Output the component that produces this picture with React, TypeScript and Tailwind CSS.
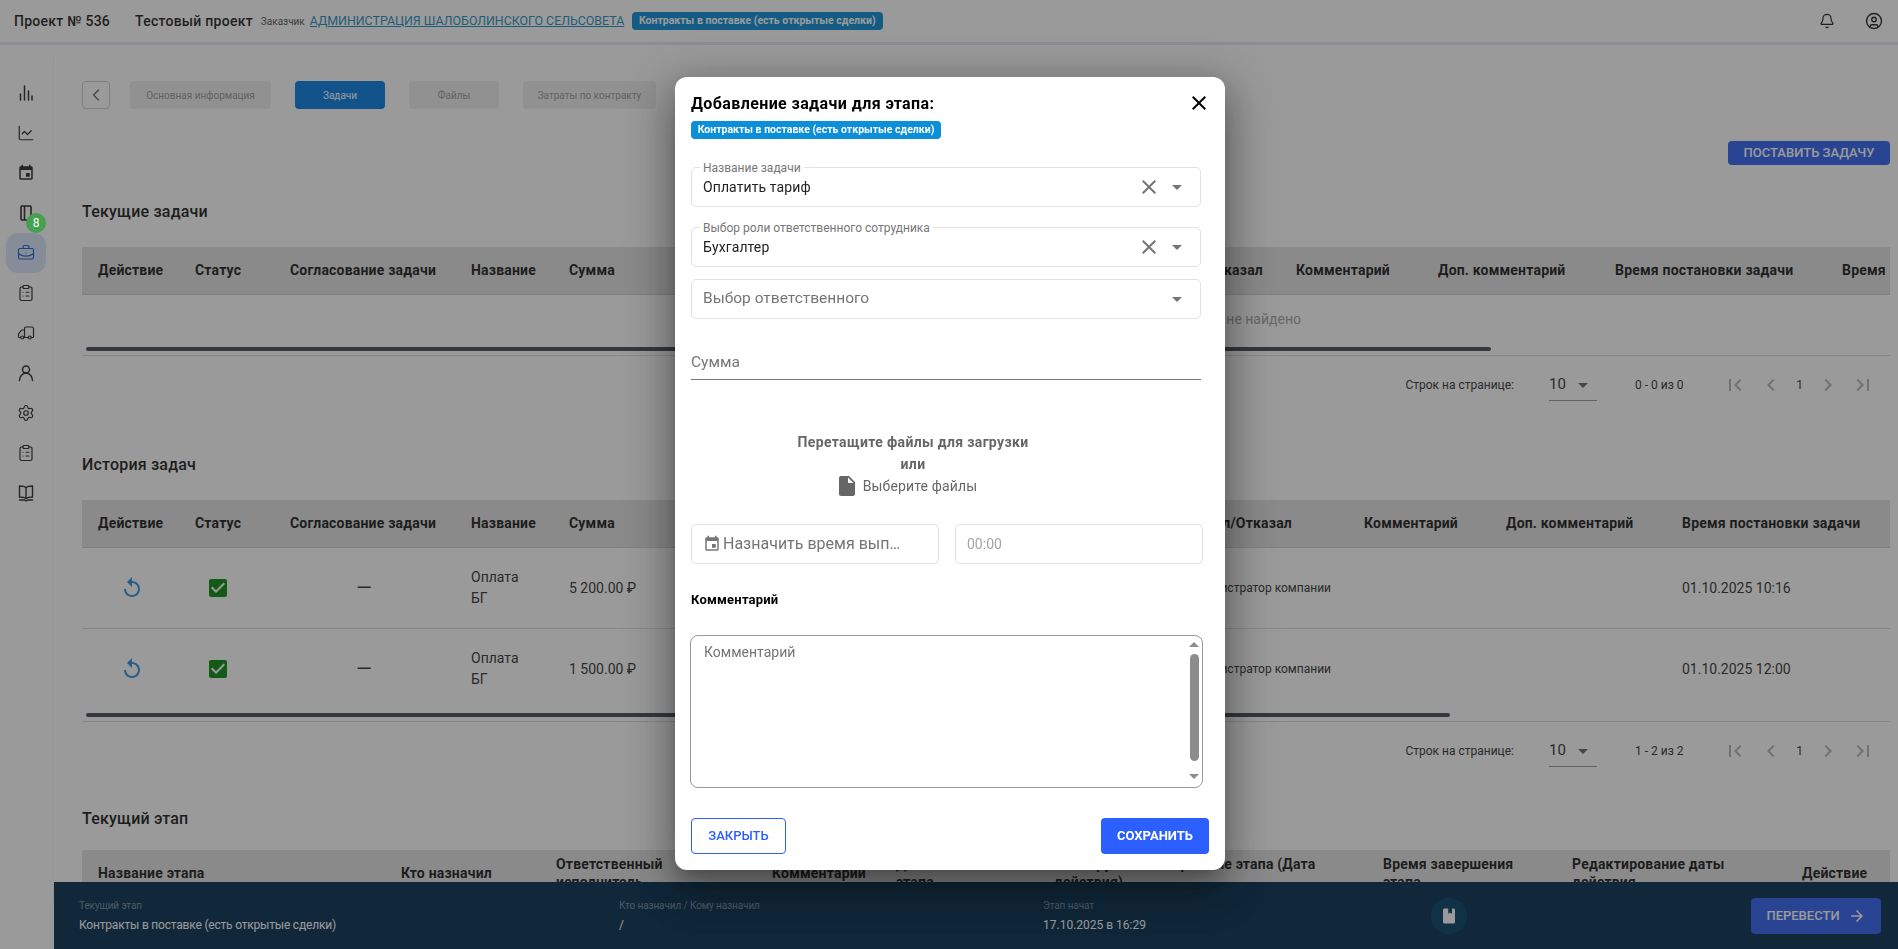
import { Bell, BriefcaseBusiness, ChartLine, CircleUser, ChevronLeft, ClipboardList, Settings, Truck } from "lucide-react";

type MuiIconProps = { d: string; className?: string };

const MuiIcon = ({ d, className }: MuiIconProps) => (
  <svg viewBox="0 0 24 24" fill="currentColor" className={className}>
    <path d={d} />
  </svg>
);

const CLOSE = "M19 6.41 17.59 5 12 10.59 6.41 5 5 6.41 10.59 12 5 17.59 6.41 19 12 13.41 17.59 19 19 17.59 13.41 12z";
const CARET = "M7 10l5 5 5-5z";
const FILE = "M6 2c-1.1 0-1.99.9-1.99 2L4 20c0 1.1.89 2 1.99 2H18c1.1 0 2-.9 2-2V8l-6-6H6zm7 7V3.5L18.5 9H13z";
const EVENT = "M17 12h-5v5h5v-5zM16 1v2H8V1H6v2H5c-1.11 0-1.99.9-1.99 2L3 19c0 1.1.89 2 2 2h14c1.1 0 2-.9 2-2V5c0-1.1-.9-2-2-2h-1V1h-2zm3 18H5V8h14v11z";
const REPLAY = "M12 5V1L7 6l5 5V7c3.31 0 6 2.69 6 6s-2.69 6-6 6-6-2.69-6-6H4c0 4.42 3.58 8 8 8s8-3.58 8-8-3.58-8-8-8z";
const CHECKBOX = "M19 3H5c-1.11 0-2 .9-2 2v14c0 1.1.89 2 2 2h14c1.11 0 2-.9 2-2V5c0-1.1-.89-2-2-2zm-9 14l-5-5 1.41-1.41L10 14.17l7.59-7.59L19 8l-9 9z";
const FIRST = "M18.41 16.59L13.82 12l4.59-4.59L17 6l-6 6 6 6zM6 6h2v12H6z";
const PREV = "M15.41 7.41L14 6l-6 6 6 6 1.41-1.41L10.83 12z";
const NEXT = "M10 6L8.59 7.41 13.17 12l-4.58 4.59L10 18l6-6z";
const LAST = "M5.59 7.41L10.18 12l-4.59 4.59L7 18l6-6-6-6zM16 6h2v12h-2z";
const ARROW = "M12 4l-1.41 1.41L16.17 11H4v2h12.17l-5.58 5.59L12 20l8-8z";
const BOOKMARK = "M18 2h-2v7l-2.5-1.5L11 9V2H6c-1.1 0-2 .9-2 2v16c0 1.1.9 2 2 2h12c1.1 0 2-.9 2-2V4c0-1.1-.9-2-2-2z";

const tabs = ["Основная информация", "Задачи", "Файлы", "Затраты по контракту"];

const currentCols = "grid-cols-[97px_95px_181px_98px_539px_188px_142px_177px_227px_200px]";
const historyCols = "grid-cols-[97px_95px_181px_98px_568px_227px_142px_176px_220px]";
const stageCols = "grid-cols-[303px_155px_216px_124px_158px_329px_189px_230px_88px]";

const currentHead = ["Действие", "Статус", "Согласование задачи", "Название", "Сумма", "Согласовал/Отказал", "Комментарий", "Доп. комментарий", "Время постановки задачи", "Время выполнения"];
const historyHead = ["Действие", "Статус", "Согласование задачи", "Название", "Сумма", "Согласовал/Отказал", "Комментарий", "Доп. комментарий", "Время постановки задачи"];

const historyRows = [
  { sum: "5 200.00 ₽", time: "01.10.2025 10:16" },
  { sum: "1 500.00 ₽", time: "01.10.2025 12:00" },
];

function SideIcons() {
  const cls = "h-[18px] w-[18px] text-[#2a2a2a]";
  return (
    <aside className="mt-3 w-[54px] shrink-0 border-r border-[#f2f2f2] pr-px pt-4">
      <div className="flex h-10 items-center justify-center">
        <svg viewBox="0 0 18 18" className={cls} fill="none" stroke="currentColor" strokeWidth="1.5" strokeLinecap="round">
          <path d="M3.5 16V10M7.5 16V2M11.5 16V7M15 16v-4" />
        </svg>
      </div>
      <div className="flex h-10 items-center justify-center">
        <ChartLine className={cls} strokeWidth={1.6} />
      </div>
      <div className="flex h-10 items-center justify-center">
        <MuiIcon d={EVENT} className="h-[18px] w-[18px] text-[#2a2a2a]" />
      </div>
      <div className="relative flex h-10 items-center justify-center">
        <svg viewBox="0 0 18 18" className={cls} fill="none" stroke="currentColor" strokeWidth="1.6">
          <rect x="4" y="2" width="10" height="14" rx="1" />
          <path d="M7.5 2v14" />
        </svg>
        <span className="absolute left-[26px] top-5 z-10 flex h-5 w-5 items-center justify-center rounded-full bg-[#46a04d] text-xs text-white">8</span>
      </div>
      <div className="flex h-10 items-center justify-center">
        <div className="flex h-10 w-10 items-center justify-center rounded-xl bg-[#dce8fb]">
          <BriefcaseBusiness className="h-[18px] w-[18px] text-[#1f5fd0]" strokeWidth={1.6} />
        </div>
      </div>
      <div className="flex h-10 items-center justify-center">
        <ClipboardList className={cls} strokeWidth={1.6} />
      </div>
      <div className="flex h-10 items-center justify-center">
        <Truck className={`${cls} -scale-x-100`} strokeWidth={1.6} />
      </div>
      <div className="flex h-10 items-center justify-center">
        <svg viewBox="0 0 18 18" className={cls} fill="none" stroke="currentColor" strokeWidth="1.5" strokeLinecap="round">
          <circle cx="9" cy="5.5" r="3.5" />
          <path d="M2.5 16.5c0-4 3-7.5 6.5-7.5s6.5 3.5 6.5 7.5" />
        </svg>
      </div>
      <div className="flex h-10 items-center justify-center">
        <Settings className={cls} strokeWidth={1.6} />
      </div>
      <div className="flex h-10 items-center justify-center">
        <ClipboardList className={cls} strokeWidth={1.6} />
      </div>
      <div className="flex h-10 items-center justify-center">
        <svg viewBox="0 0 18 18" className={cls} fill="none" stroke="currentColor" strokeWidth="1.4" strokeLinejoin="round" strokeLinecap="round">
          <path d="M9 3.5C7.5 2.3 5 2 2.5 2v11c2.5 0 5 .3 6.5 1.5 1.5-1.2 4-1.5 6.5-1.5V2C13 2 10.5 2.3 9 3.5zM9 3.5v11M2.5 16h5l1.5 1 1.5-1h5" />
        </svg>
      </div>
    </aside>
  );
}

function Pagination({ range }: { range: string }) {
  return (
    <div className="flex h-[58px] items-center justify-end pr-[15px] text-xs text-[#333]">
      <span>Строк на странице:</span>
      <div className="ml-[35px] flex h-[32px] w-12 items-center justify-between border-b border-[#999] pr-0.5 text-[15px]">
        10
        <MuiIcon d={CARET} className="h-6 w-6 text-[#666]" />
      </div>
      <span className="ml-[38px] w-[50px]">{range}</span>
      <div className="ml-[38px] flex items-center text-[#b5b5b5]">
        <MuiIcon d={FIRST} className="h-6 w-6" />
        <MuiIcon d={PREV} className="ml-3 h-6 w-6" />
        <span className="w-[33px] text-center text-[#333]">1</span>
        <MuiIcon d={NEXT} className="h-6 w-6" />
        <MuiIcon d={LAST} className="ml-[11px] h-6 w-6" />
      </div>
    </div>
  );
}

// the "Отказал" column sits under the dialog, only its right end shows
function HeadRow({ cols, cells, endPad }: { cols: string; cells: string[]; endPad: string }) {
  return (
    <div className={`grid h-12 ${cols} items-center border-b border-[#d0d0d0] bg-[#e2e2e2] pb-[2px] pl-4 text-sm font-bold leading-[18px] tracking-[0.2px] text-[#1c1c1c]`}>
      {cells.map((c, i) => (
        <div key={c} className={`whitespace-nowrap ${i === 5 ? `text-right ${endPad}` : ""}`}>
          {c}
        </div>
      ))}
    </div>
  );
}

function ScrollTrack({ thumb }: { thumb: string }) {
  return (
    <div className="flex h-[13px] items-start border-b border-[#ddd] pl-1 pt-1">
      <div className={`h-1 rounded-full bg-[#464e55] ${thumb}`} />
    </div>
  );
}

function Field({ label, value }: { label: string; value: string }) {
  return (
    <div className="relative flex h-10 items-center rounded-[5px] border border-[#e2e2e2] pl-[11px] pr-[11px]">
      <span className="absolute -top-[7px] left-[8px] bg-white px-[3px] text-xs leading-[14px] text-[#777]">{label}</span>
      <span className="flex-1 text-sm tracking-[0.1px] text-[#222]">{value}</span>
      <MuiIcon d={CLOSE} className="h-[24px] w-[24px] text-[#757575]" />
      <MuiIcon d={CARET} className="ml-[4px] h-6 w-6 text-[#757575]" />
    </div>
  );
}

function AddTaskModal() {
  return (
    <div className="fixed inset-0 flex items-center justify-center bg-[#1e1e1e]/45">
      <div className="mb-[2px] ml-[2px] flex h-[793px] w-[550px] flex-col rounded-xl bg-white px-4 pt-4 shadow-[0_11px_15px_-7px_rgba(0,0,0,0.2),0_24px_38px_3px_rgba(0,0,0,0.2),0_9px_46px_8px_rgba(0,0,0,0.25)]">
        <div className="flex h-5 items-center justify-between">
          <h2 className="mt-[2px] text-base font-bold tracking-[0.4px] text-black">Добавление задачи для этапа:</h2>
          <MuiIcon d={CLOSE} className="-mr-[2px] h-6 w-6 text-black" />
        </div>
        <span className="mt-2 flex h-[18px] w-[250px] items-center justify-center rounded bg-[#0b8fd8] text-[10.5px] font-bold text-white">Контракты в поставке (есть открытые сделки)</span>

        <div className="mt-7 w-[510px]">
          <Field label="Название задачи" value="Оплатить тариф" />
          <div className="mt-5">
            <Field label="Выбор роли ответственного сотрудника" value="Бухгалтер" />
          </div>
          <div className="mt-3 flex h-10 items-center justify-between rounded-[5px] border border-[#e2e2e2] pl-[11px] pr-[11px] text-[15.5px] text-[#757575]">
            Выбор ответственного
            <MuiIcon d={CARET} className="h-6 w-6" />
          </div>
          <div className="mt-[27px] flex h-[34px] items-center border-b border-[#777] pt-[1px] text-[15.5px] text-[#757575]">Сумма</div>
        </div>

        <div className="mt-[51px] flex w-[444px] flex-col items-center text-sm text-[#666]">
          <span className="font-bold leading-[22px] tracking-[0.35px]">Перетащите файлы для загрузки</span>
          <span className="font-bold leading-[22px] tracking-[0.35px]">или</span>
          <span className="flex h-[22px] items-center gap-1 pr-[14px] tracking-[0.15px]">
            <MuiIcon d={FILE} className="h-6 w-6" />
            Выберите файлы
          </span>
        </div>

        <div className="mt-[27px] flex gap-4">
          <div className="flex h-10 w-[248px] items-center rounded-[5px] border border-[#e2e2e2] pl-[11px] text-base text-[#757575]">
            <MuiIcon d={EVENT} className="h-[18px] w-[18px] shrink-0" />
            <span className="ml-[2px] w-[178px] truncate">Назначить время выполнения</span>
          </div>
          <div className="flex h-10 w-[248px] items-center rounded-[5px] border border-[#e2e2e2] pl-[11px] text-sm text-[#a5a5a5]">00:00</div>
        </div>

        <div className="mt-[27px] text-[13px] font-bold leading-[18px] tracking-[0.2px] text-black">Комментарий</div>

        <div className="relative -ml-px mt-[26px] h-[153px] w-[513px] rounded-lg border border-[#999] pl-[13px] pt-[6px] text-sm text-[#757575]">
          Комментарий
          <div className="absolute bottom-0 right-0 top-0 flex w-[13px] flex-col items-center pb-2 pr-[3px] pt-1.5">
            <span className="h-0 w-0 border-x-[5px] border-b-[5px] border-x-transparent border-b-[#8c8c8c]" />
            <span className="mb-[13px] mt-[7px] w-[9px] flex-1 rounded-full bg-[#8c8c8c]" />
            <span className="h-0 w-0 border-x-[5px] border-t-[5px] border-x-transparent border-t-[#8c8c8c]" />
          </div>
        </div>

        <div className="mt-[30px] flex items-center justify-between">
          <button className="h-9 w-[95px] rounded border border-[#2b5fff] text-[13px] font-medium text-[#2b5fff]">ЗАКРЫТЬ</button>
          <button className="h-9 w-[108px] rounded bg-[#2b5fff] text-[13px] font-bold text-white">СОХРАНИТЬ</button>
        </div>
      </div>
    </div>
  );
}

export default function App() {
  return (
    <div className="relative h-screen overflow-hidden bg-white [font-family:Roboto,sans-serif]">
      <header className="flex h-[45px] items-center border-b-[3px] border-[#e8e8f2] pl-[14px] pr-[15px]">
        <span className="text-sm font-medium tracking-[0.25px] text-[#1f1f1f]">Проект № 536</span>
        <span className="ml-[25px] text-sm font-medium tracking-[0.25px] text-[#1f1f1f]">Тестовый проект</span>
        <span className="ml-2 text-[10px] text-[#555]">Заказчик</span>
        <a className="ml-[5px] w-[316px] whitespace-nowrap text-[12.4px] text-[#1f8fc4] underline">АДМИНИСТРАЦИЯ ШАЛОБОЛИНСКОГО СЕЛЬСОВЕТА</a>
        <span className="ml-1.5 flex h-[18px] w-[251px] items-center justify-center rounded bg-[#0b8fd8] text-[10.5px] font-bold text-white">Контракты в поставке (есть открытые сделки)</span>
        <Bell className="ml-auto h-4 w-4 text-[#222]" strokeWidth={1.8} />
        <CircleUser className="ml-[30px] h-[18px] w-[18px] text-[#222]" strokeWidth={1.8} />
      </header>

      <div className="flex">
        <SideIcons />

        <main className="min-w-0 flex-1 pl-7 pr-2 pt-9">
          <div className="flex items-center">
            <div className="flex h-7 w-7 items-center justify-center rounded border border-[#ccc] text-[#666]">
              <ChevronLeft className="h-5 w-5" strokeWidth={1.6} />
            </div>
            <div className="ml-5 flex gap-6">
              {tabs.map((t, i) => (
                <div
                  key={t}
                  className={`flex h-7 items-center justify-center rounded text-[10px] ${i === 0 ? "w-[141px]" : i === 3 ? "w-[133px]" : "w-[90px]"} ${i === 1 ? "bg-[#0a7fe6] text-white" : "bg-[#efefef] text-[#999]"}`}
                >
                  {t}
                </div>
              ))}
            </div>
          </div>

          <div className="mt-8 flex justify-end">
            <button className="h-6 w-[162px] rounded bg-[#3263f0] text-[13px] font-medium text-white">ПОСТАВИТЬ ЗАДАЧУ</button>
          </div>

          <h3 className="mt-[35px] text-base font-medium leading-6 tracking-[0.2px] text-[#1c1c1c]">Текущие задачи</h3>
          <div className="mt-[23px] overflow-hidden">
            <HeadRow cols={currentCols} cells={currentHead} endPad="pr-[33px]" />
            <div className="flex h-12 items-center justify-end pr-[589px] text-sm text-[#a3a3a3]">Ничего не найдено</div>
            <ScrollTrack thumb="w-[1405px]" />
          </div>
          <Pagination range="0 - 0 из 0" />

          <h3 className="mt-[39px] text-base font-medium leading-6 tracking-[0.2px] text-[#1c1c1c]">История задач</h3>
          <div className="mt-[23px] overflow-hidden">
            <HeadRow cols={historyCols} cells={historyHead} endPad="pr-[72px]" />
            {historyRows.map((row, i) => (
              <div key={row.time} className={`grid ${historyCols} items-center pl-4 text-sm text-[#333] ${i === 0 ? "h-[81px] border-b border-[#ddd]" : "h-20"}`}>
                <div className="flex justify-center pr-[29px]">
                  <MuiIcon d={REPLAY} className="h-6 w-6 text-[#2f8fe0]" />
                </div>
                <div className="pl-[11px]">
                  <MuiIcon d={CHECKBOX} className="h-6 w-6 text-[#0c8a12]" />
                </div>
                <div className="flex w-[148px] justify-center text-[20px] leading-none">—</div>
                <div className="leading-[21px]">
                  Оплата
                  <br />
                  БГ
                </div>
                <div className="whitespace-nowrap">{row.sum}</div>
                <div className="whitespace-nowrap pr-[33px] text-right text-xs">Администратор компании</div>
                <div />
                <div />
                <div className="whitespace-nowrap">{row.time}</div>
              </div>
            ))}
            <ScrollTrack thumb="w-[1364px]" />
          </div>
          <Pagination range="1 - 2 из 2" />

          <h3 className="mt-[27px] text-base font-medium leading-6 tracking-[0.2px] text-[#1c1c1c]">Текущий этап</h3>
          <div className={`mt-[19px] grid h-12 ${stageCols} items-center overflow-hidden bg-[#e2e2e2] pb-[2px] pl-4 text-sm font-bold leading-[18px] tracking-[0.2px] text-[#1c1c1c]`}>
            <div>Название этапа</div>
            <div>Кто назначил</div>
            <div className="pr-[60px]">Ответственный исполнитель</div>
            <div>Комментарии</div>
            <div>
              Дата начала
              <br />
              этапа
            </div>
            <div className="pr-8">Планируемое завершение этапа (Дата действия)</div>
            <div className="pr-10">Время завершения этапа</div>
            <div className="pr-10">Редактирование даты действия</div>
            <div>Действие</div>
          </div>
        </main>
      </div>

      <footer className="absolute bottom-0 left-[54px] right-0 flex h-[67px] items-center bg-[#053051] pl-[25px] pr-[17px] text-white">
        <div className="w-[540px]">
          <div className="text-[10px] leading-4 tracking-[-0.1px] text-white/45">Текущий этап</div>
          <div className="mt-[3px] text-xs leading-4 tracking-[-0.2px]">Контракты в поставке (есть открытые сделки)</div>
        </div>
        <div className="w-[424px]">
          <div className="text-[10px] leading-4 tracking-[-0.1px] text-white/45">Кто назначил / Кому назначил</div>
          <div className="mt-[3px] text-xs leading-4">/</div>
        </div>
        <div className="w-[388px]">
          <div className="text-[10px] leading-4 tracking-[-0.1px] text-white/45">Этап начат</div>
          <div className="mt-[3px] text-xs leading-4">17.10.2025 в 16:29</div>
        </div>
        <div className="flex h-9 w-9 items-center justify-center rounded-full bg-[#054367]">
          <MuiIcon d={BOOKMARK} className="h-[18px] w-[18px] text-white" />
        </div>
        <button className="ml-auto flex h-9 w-[130px] items-center justify-center gap-2 rounded bg-[#3263f0] text-[13px] font-medium text-white">
          ПЕРЕВЕСТИ
          <MuiIcon d={ARROW} className="h-[18px] w-[18px]" />
        </button>
      </footer>

      <AddTaskModal />
    </div>
  );
}
